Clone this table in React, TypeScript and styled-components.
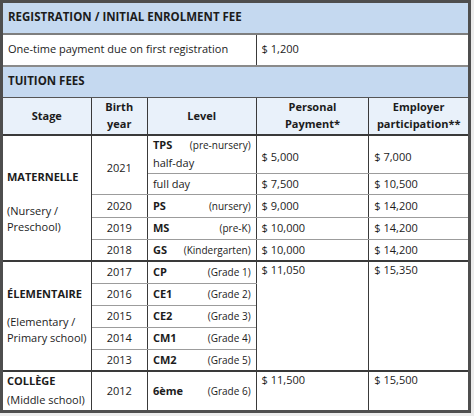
import styled, { createGlobalStyle } from "styled-components";

const GlobalStyle = createGlobalStyle`
  body {
    margin: 0;
    background: #ececec;
    font-family: "Open Sans", "Noto Sans", sans-serif;
    color: #1c1c1c;
  }
`;

const DARK = "#3a3a3a";
const LIGHT = "#9c9c9c";

type Row = {
  year?: string;
  yearSpan?: number;
  code?: string;
  note?: string;
  extra?: string;
  personal?: string;
  employer?: string;
  priceSpan?: number;
  h: number;
};

type Group = {
  title: string;
  sub: string[];
  gap: number;
  top: number;
  rows: Row[];
};

const groups: Group[] = [
  {
    title: "MATERNELLE",
    sub: ["(Nursery /", "Preschool)"],
    gap: 18,
    top: 8,
    rows: [
      { year: "2021", yearSpan: 2, code: "TPS", note: "(pre-nursery)", extra: "half-day", personal: "$ 5,000", employer: "$ 7,000", h: 38 },
      { extra: "full day", personal: "$ 7,500", employer: "$ 10,500", h: 21 },
      { year: "2020", code: "PS", note: "(nursery)", personal: "$ 9,000", employer: "$ 14,200", h: 23 },
      { year: "2019", code: "MS", note: "(pre-K)", personal: "$ 10,000", employer: "$ 14,200", h: 22 },
      { year: "2018", code: "GS", note: "(Kindergarten)", personal: "$ 10,000", employer: "$ 14,200", h: 22 },
    ],
  },
  {
    title: "ÉLEMENTAIRE",
    sub: ["(Elementary /", "Primary school)"],
    gap: 12,
    top: 0,
    rows: [
      { year: "2017", code: "CP", note: "(Grade 1)", personal: "$ 11,050", employer: "$ 15,350", priceSpan: 5, h: 22 },
      { year: "2016", code: "CE1", note: "(Grade 2)", h: 22 },
      { year: "2015", code: "CE2", note: "(Grade 3)", h: 22 },
      { year: "2014", code: "CM1", note: "(Grade 4)", h: 22 },
      { year: "2013", code: "CM2", note: "(Grade 5)", h: 22 },
    ],
  },
  {
    title: "COLLÈGE",
    sub: ["(Middle school)"],
    gap: 3,
    top: 0,
    rows: [
      { year: "2012", code: "6ème", note: "(Grade 6)", personal: "$ 11,500", employer: "$ 15,500", priceSpan: 1, h: 40 },
    ],
  },
];

const Table = styled.table`
  width: 471px;
  border-collapse: collapse;
  table-layout: fixed;
  border: 3px solid #4e4e4e;
  background: #fff;
  font-size: 11px;
  line-height: 16px;
`;

const SectionCell = styled.th<{ $below: string; $h: number }>`
  height: ${(p) => p.$h}px;
  padding: 0 5px 2px 5px;
  text-align: left;
  font-size: 11.5px;
  font-weight: 700;
  background: #c5d9f0;
  border-bottom: ${(p) => p.$below};
`;

const PlainCell = styled.td`
  height: 27px;
  padding: 0 5px 3px 5px;
  border-left: 1px solid ${DARK};
  border-right: 1px solid ${DARK};
  border-bottom: 2px solid #8a8a8a;
`;

const HeadCell = styled.th`
  height: 29px;
  padding: 0 2px 2px 2px;
  font-weight: 700;
  font-size: 11px;
  line-height: 17px;
  text-align: center;
  background: #e9f1fa;
  border-left: 1px solid ${DARK};
  border-right: 1px solid ${DARK};
  border-bottom: 2px solid ${DARK};
`;

const Cell = styled.td<{ $center?: boolean; $top?: boolean; $sep?: boolean; $pt?: number }>`
  padding: ${(p) => `${p.$pt ?? 0}px 5px 0 5px`};
  text-align: ${(p) => (p.$center ? "center" : "left")};
  vertical-align: ${(p) => (p.$top ? "top" : "middle")};
  border-left: 1px solid ${DARK};
  border-right: 1px solid ${DARK};
  border-top: ${(p) => (p.$sep ? `2px solid ${DARK}` : `1px solid ${LIGHT}`)};
  border-bottom: 1px solid ${LIGHT};
`;

const StageCell = styled(Cell)`
  padding-left: 4px;
  padding-right: 2px;
  white-space: nowrap;
`;

const StageTitle = styled.div<{ $gap: number }>`
  font-weight: 700;
  margin-bottom: ${(p) => p.$gap}px;
`;

const LevelLine = styled.div`
  display: flex;
  justify-content: space-between;
  align-items: baseline;
  line-height: 18px;
`;

const Extra = styled.div`
  line-height: 18px;
`;

const Code = styled.span`
  font-weight: 700;
`;

const Note = styled.span`
  font-size: 10px;
`;

export default function App() {
  return (
    <>
      <GlobalStyle />
      <Table>
        <colgroup>
          <col style={{ width: 89 }} />
          <col style={{ width: 56 }} />
          <col style={{ width: 108 }} />
          <col style={{ width: 112 }} />
          <col style={{ width: 100 }} />
        </colgroup>
        <tbody>
          <tr>
            <SectionCell colSpan={5} $h={28} $below="2px solid #7e7e7e">
              REGISTRATION / INITIAL ENROLMENT FEE
            </SectionCell>
          </tr>
          <tr>
            <PlainCell colSpan={3}>One-time payment due on first registration</PlainCell>
            <PlainCell colSpan={2}>$ 1,200</PlainCell>
          </tr>
          <tr>
            <SectionCell colSpan={5} $h={28} $below="1px solid #555">
              TUITION FEES
            </SectionCell>
          </tr>
          <tr>
            <HeadCell>Stage</HeadCell>
            <HeadCell>
              Birth
              <br />
              year
            </HeadCell>
            <HeadCell>Level</HeadCell>
            <HeadCell>
              Personal
              <br />
              Payment*
            </HeadCell>
            <HeadCell>
              Employer
              <br />
              participation**
            </HeadCell>
          </tr>
          {groups.map((g, gi) =>
            g.rows.map((r, ri) => {
              const sep = ri === 0;
              const priceTop = r.priceSpan !== undefined;
              const stacked = !!(r.code && r.extra);
              return (
                <tr key={`${gi}-${ri}`} style={{ height: r.h }}>
                  {ri === 0 && (
                    <StageCell rowSpan={g.rows.length} $sep $pt={g.top}>
                      <StageTitle $gap={g.gap}>{g.title}</StageTitle>
                      {g.sub.map((s) => (
                        <div key={s}>{s}</div>
                      ))}
                    </StageCell>
                  )}
                  {r.year && (
                    <Cell $center $sep={sep} rowSpan={r.yearSpan ?? 1} $pt={r.yearSpan ? 6 : 0}>
                      {r.year}
                    </Cell>
                  )}
                  <Cell $sep={sep} $top={stacked}>
                    {r.code && (
                      <LevelLine>
                        <Code>{r.code}</Code>
                        <Note>{r.note}</Note>
                      </LevelLine>
                    )}
                    {r.extra && <Extra>{r.extra}</Extra>}
                  </Cell>
                  {r.personal && (
                    <>
                      <Cell $sep={sep} $top={priceTop} $pt={stacked ? 6 : 0} rowSpan={r.priceSpan ?? 1}>
                        {r.personal}
                      </Cell>
                      <Cell $sep={sep} $top={priceTop} $pt={stacked ? 6 : 0} rowSpan={r.priceSpan ?? 1}>
                        {r.employer}
                      </Cell>
                    </>
                  )}
                </tr>
              );
            })
          )}
        </tbody>
      </Table>
    </>
  );
}
